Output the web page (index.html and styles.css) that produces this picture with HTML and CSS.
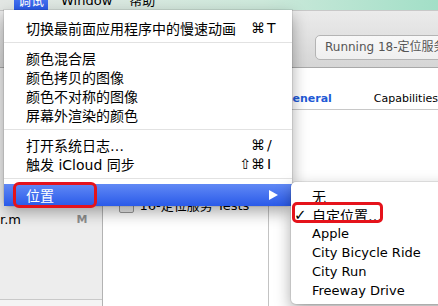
FILE: index.html
```html
<!DOCTYPE html>
<html lang="zh">
<head>
    <meta charset="UTF-8">
    <meta name="viewport" content="width=device-width, initial-scale=1.0">
    <title>调试 - 位置</title>
    <link rel="stylesheet" href="styles.css">
</head>
<body>
    <div class="screen">
        <div class="menubar">
            <span class="mb-item open">调试</span>
            <span class="mb-item">Window</span>
            <span class="mb-item">帮助</span>
        </div>

        <div class="window">
            <div class="toolbar">
                <div class="status">Running 18-定位服务</div>
            </div>
            <div class="workspace">
                <div class="navigator">
                    <div class="nav-list">
                        <div class="nav-file"><span>r.m</span><span class="scm">M</span></div>
                    </div>
                    <div class="nav-footer"></div>
                </div>
                <div class="targets">
                    <div class="target"><span class="checkbox"></span>16-定位服务 Tests</div>
                </div>
                <div class="settings">
                    <div class="jumpbar"></div>
                    <div class="tabs">
                        <span class="tab active">General</span>
                        <span class="tab">Capabilities</span>
                    </div>
                </div>
            </div>
        </div>

        <div class="menu main-menu">
            <div class="item">
                <span>切换最前面应用程序中的慢速动画</span>
                <span class="keys"><span class="mods">⌘</span><span class="key">T</span></span>
            </div>
            <div class="sep"></div>
            <div class="item">颜色混合层</div>
            <div class="item">颜色拷贝的图像</div>
            <div class="item">颜色不对称的图像</div>
            <div class="item">屏幕外渲染的颜色</div>
            <div class="sep"></div>
            <div class="item">
                <span>打开系统日志…</span>
                <span class="keys"><span class="mods">⌘</span><span class="key">/</span></span>
            </div>
            <div class="item">
                <span>触发 iCloud 同步</span>
                <span class="keys"><span class="mods">⇧⌘</span><span class="key">I</span></span>
            </div>
            <div class="sep"></div>
            <div class="item selected">
                <span>位置</span>
                <svg class="arrow" width="9" height="10" viewBox="0 0 9 10"><path d="M0 0 L9 5 L0 10 Z" fill="#fff"/></svg>
            </div>
        </div>

        <div class="menu submenu">
            <div class="sub-item"><span class="check"></span><span class="zh">无</span></div>
            <div class="sub-item"><span class="check">✓</span><span class="zh">自定位置…</span></div>
            <div class="sub-item"><span class="check"></span>Apple</div>
            <div class="sub-item"><span class="check"></span>City Bicycle Ride</div>
            <div class="sub-item"><span class="check"></span>City Run</div>
            <div class="sub-item"><span class="check"></span>Freeway Drive</div>
        </div>

        <div class="callout callout-main"></div>
        <div class="callout callout-sub"></div>
    </div>
</body>
</html>
```

FILE: styles.css
```css
* {
    box-sizing: border-box;
}
body {
    margin: 0;
    font-family: "DejaVu Sans", "Noto Sans CJK SC", sans-serif;
    font-size: 13px;
    color: #000;
    background: #fff;
}
.screen {
    position: relative;
    width: 438px;
    height: 306px;
    overflow: hidden;
}

/* menu bar, cut off at the top */
.menubar {
    height: 22px;
    margin-top: -12px;
    padding-left: 14px;
    display: flex;
    gap: 9px;
    line-height: 26px;
    font-size: 13px;
    background: linear-gradient(to right, #e3e7e4, #cde9db 60%, #a2dfc7);
}
.mb-item {
    padding: 0 4px;
}
.mb-item.open {
    color: #fff;
    background: linear-gradient(#6189f5, #2a5ae9);
}

/* xcode window behind the menus */
.window {
    height: 296px;
    display: flex;
    flex-direction: column;
}
.toolbar {
    height: 58px;
    padding: 24px 0 0 315px;
    background: linear-gradient(#ebebeb, #d6d6d6);
    border-top: 1px solid #c8c8c8;
    border-bottom: 1px solid #a9a9a9;
}
.status {
    width: 170px;
    height: 25px;
    padding-left: 9px;
    line-height: 23px;
    font-size: 12px;
    color: #555;
    background: linear-gradient(#f8f8f8, #efefef);
    border: 1px solid #b4b4b4;
    border-radius: 5px;
    white-space: nowrap;
}
.workspace {
    flex: 1;
    display: flex;
}
.navigator {
    width: 106px;
    display: flex;
    flex-direction: column;
    background: #ededed;
    border-right: 1px solid #b3b3b3;
}
.nav-list {
    flex: 1;
    padding-top: 143px;
}
.nav-file {
    height: 18px;
    line-height: 18px;
    padding-right: 14px;
    display: flex;
    justify-content: space-between;
}
.scm {
    font-size: 11px;
    font-weight: bold;
    color: #8d8d8d;
}
.nav-footer {
    height: 7px;
    border-top: 1px solid #c9c9c9;
    background: #f4f4f4;
}
.targets {
    width: 172px;
    padding: 128px 0 0 16px;
    border-right: 1px solid #c3c3c3;
    background: #fff;
}
.target {
    display: flex;
    align-items: center;
    gap: 6px;
    height: 16px;
    white-space: nowrap;
}
.checkbox {
    width: 15px;
    height: 14px;
    margin-top: 4px;
    border: 1px solid #9a9a9a;
    border-radius: 2px;
    background: linear-gradient(#fff, #ececec);
}
.settings {
    flex: 1;
    background: #fff;
}
.jumpbar {
    height: 20px;
}
.tabs {
    height: 22px;
    padding-left: 14px;
    display: flex;
    gap: 42px;
    align-items: center;
    font-size: 11px;
    border-bottom: 1px solid #c8c8c8;
}
.tab.active {
    color: #1f5ad6;
    font-weight: bold;
}

/* menus */
.menu {
    position: absolute;
    background: #fff;
    box-shadow: 0 6px 16px rgba(0, 0, 0, 0.35), 0 0 0 1px rgba(0, 0, 0, 0.08);
}
.main-menu {
    left: 4px;
    top: 10px;
    width: 288px;
    padding: 8px 0 0;
    font-size: 14px;
    border-radius: 0 0 5px 5px;
}
.item {
    height: 19px;
    padding: 0 15px 0 22px;
    display: flex;
    align-items: center;
    justify-content: space-between;
    white-space: nowrap;
}
.sep {
    height: 1px;
    margin: 5px 0;
    background: #e2e2e2;
}
.keys {
    display: flex;
}
.mods {
    text-align: right;
}
.key {
    width: 12px;
    padding-left: 2px;
}
.item.selected {
    height: 22px;
    color: #fff;
    background: linear-gradient(#6189f5, #2a5ae9);
    padding-right: 14px;
}
.submenu {
    left: 291px;
    top: 182px;
    width: 170px;
    padding: 4px 0;
    border-radius: 5px;
}
.sub-item {
    height: 19px;
    padding-left: 3px;
    display: flex;
    align-items: center;
    white-space: nowrap;
}
.check {
    width: 18px;
    font-size: 15px;
}
.zh {
    font-size: 14px;
}

/* red annotation boxes */
.callout {
    position: absolute;
    border: 3px solid #e5131b;
    border-radius: 6px;
}
.callout-main {
    left: 13px;
    top: 182px;
    width: 84px;
    height: 26px;
}
.callout-sub {
    left: 292px;
    top: 202px;
    width: 91px;
    height: 21px;
    border-radius: 5px;
}
```
